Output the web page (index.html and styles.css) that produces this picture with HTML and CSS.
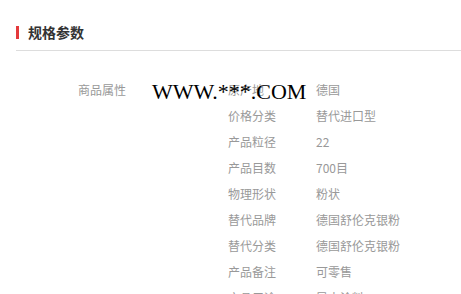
FILE: index.html
```html
<!DOCTYPE html>
<html>
<head>
    <meta charset="UTF-8">
    <title>规格参数</title>
    <link rel="stylesheet" href="styles.css">
</head>
<body>
<div class="spec">
    <div class="spec-title">规格参数</div>
    <div class="spec-body">
        <div class="spec-group">商品属性</div>
        <div class="spec-list">
            <div class="spec-row"><span class="spec-name">原产地</span><span class="spec-value">德国</span></div>
            <div class="spec-row"><span class="spec-name">价格分类</span><span class="spec-value">替代进口型</span></div>
            <div class="spec-row"><span class="spec-name">产品粒径</span><span class="spec-value">22</span></div>
            <div class="spec-row"><span class="spec-name">产品目数</span><span class="spec-value">700目</span></div>
            <div class="spec-row"><span class="spec-name">物理形状</span><span class="spec-value">粉状</span></div>
            <div class="spec-row"><span class="spec-name">替代品牌</span><span class="spec-value">德国舒伦克银粉</span></div>
            <div class="spec-row"><span class="spec-name">替代分类</span><span class="spec-value">德国舒伦克银粉</span></div>
            <div class="spec-row"><span class="spec-name">产品备注</span><span class="spec-value">可零售</span></div>
            <div class="spec-row"><span class="spec-name">产品用途</span><span class="spec-value">导电涂料</span></div>
        </div>
    </div>
    <div class="watermark">WWW.***.COM</div>
</div>
</body>
</html>
```

FILE: styles.css
```css
body {
    margin: 0;
    background-color: #fff;
    font-family: "Noto Sans CJK SC", "Noto Sans", sans-serif;
    overflow: hidden;
}
.spec {
    position: relative;
    margin-left: 16px;
    padding-top: 26px;
}
.spec-title {
    border-left: 3px solid #e4393c;
    padding-left: 9px;
    margin-bottom: 11px;
    font-size: 14px;
    font-weight: bold;
    color: #333;
    line-height: 13px;
}
.spec-body {
    display: flex;
    border-top: 1px solid #ddd;
    padding-top: 26px;
    padding-left: 62px;
}
.spec-group {
    width: 150px;
    font-size: 12px;
    line-height: 26px;
    color: #999;
}
.spec-row {
    display: flex;
    font-size: 12px;
    line-height: 26px;
    color: #999;
}
.spec-name {
    width: 88px;
}
.watermark {
    position: absolute;
    left: 136px;
    top: 79px;
    font-family: "Liberation Serif", serif;
    font-size: 22px;
    color: #000;
}
```
